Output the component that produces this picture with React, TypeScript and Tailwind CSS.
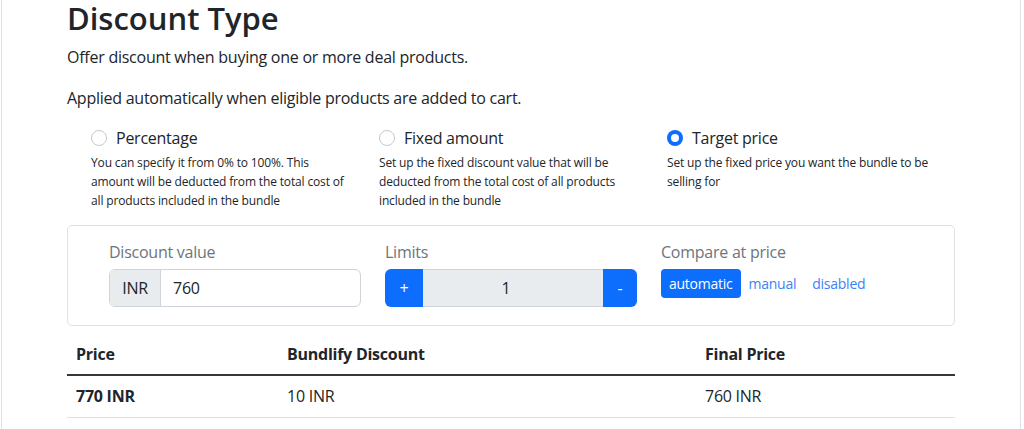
import React from "react";

const font = { fontFamily: '"Open Sans", "Noto Sans", sans-serif' };

function Radio({ checked }: { checked?: boolean }) {
  return checked ? (
    <span className="w-4 h-4 rounded-full bg-[#0d6efd] flex items-center justify-center shrink-0">
      <span className="w-2 h-2 rounded-full bg-white" />
    </span>
  ) : (
    <span className="w-4 h-4 rounded-full border border-[#c5c9cd] bg-white shrink-0" />
  );
}

const options = [
  {
    label: "Percentage",
    lines: [
      "You can specify it from 0% to 100%. This",
      "amount will be deducted from the total cost of",
      "all products included in the bundle",
    ],
  },
  {
    label: "Fixed amount",
    lines: [
      "Set up the fixed discount value that will be",
      "deducted from the total cost of all products",
      "included in the bundle",
    ],
  },
  {
    label: "Target price",
    checked: true,
    lines: ["Set up the fixed price you want the bundle to be", "selling for"],
  },
];

export default function App() {
  return (
    <div className="w-[1024px] h-[429px] overflow-hidden bg-white text-[#212529] tracking-[-0.25px]" style={font}>
      <div className="ml-[1px] w-[1020px] h-full border-x border-[#dee2e6] pl-[65px]">
        <div className="w-[888px]">
          <h2 className="text-[31px] font-semibold leading-[36px] mb-[9px] tracking-normal">Discount Type</h2>
          <p className="text-base leading-6 mb-[17px]">Offer discount when buying one or more deal products.</p>
          <p className="text-base leading-6 mb-4">Applied automatically when eligible products are added to cart.</p>

          <div className="pl-6 grid grid-cols-3 mt-[2px]">
            {options.map((o) => (
              <div key={o.label}>
                <div className="flex items-center gap-[9px] h-6">
                  <Radio checked={o.checked} />
                  <span className="text-base leading-6">{o.label}</span>
                </div>
                <div className="text-[12px] leading-[19px] mt-[3px] tracking-[-0.15px]">
                  {o.lines.map((l) => (
                    <div key={l}>{l}</div>
                  ))}
                </div>
              </div>
            ))}
          </div>

          <div className="mt-[15px] h-[101px] border border-[#dee2e6] rounded-[5px] pl-[41px] pt-[14px] grid grid-cols-[252px_252px_252px] gap-x-6">
            <div>
              <div className="text-base leading-6 text-[#6c757d] mb-[5px]">Discount value</div>
              <div className="flex h-[38px] border border-[#ced4da] rounded-[6px] overflow-hidden">
                <div className="w-[51px] bg-[#e9ecef] border-r border-[#ced4da] flex items-center justify-center text-base">INR</div>
                <div className="flex-1 flex items-center pl-3 text-base">760</div>
              </div>
            </div>
            <div>
              <div className="text-base leading-6 text-[#6c757d] mb-[5px]">Limits</div>
              <div className="flex h-[38px]">
                <div className="w-[38px] bg-[#0d6efd] text-white rounded-l-[6px] flex items-center justify-center text-base">+</div>
                <div className="flex-1 bg-[#e9ecef] border-y border-[#ced4da] flex items-center justify-center pr-[14px] text-base">1</div>
                <div className="w-[34px] bg-[#0d6efd] text-white rounded-r-[6px] flex items-center justify-center text-base">-</div>
              </div>
            </div>
            <div>
              <div className="text-base leading-6 text-[#6c757d] mb-[5px]">Compare at price</div>
              <div className="flex h-[29px] items-center text-[14px]">
                <div className="h-[29px] px-2 bg-[#0d6efd] text-white rounded-[4px] flex items-center">automatic</div>
                <div className="px-2 text-[#3b82f6]">manual</div>
                <div className="px-2 text-[#3b82f6]">disabled</div>
              </div>
            </div>
          </div>

          <div className="mt-2">
            <div className="grid grid-cols-[212px_418px_258px] border-b-2 border-[#33383c] font-bold text-base">
              <div className="px-[9px] pt-2 pb-2 leading-6">Price</div>
              <div className="px-2 pt-2 pb-2 leading-6">Bundlify Discount</div>
              <div className="px-2 pt-2 pb-2 leading-6">Final Price</div>
            </div>
            <div className="grid grid-cols-[212px_418px_258px] border-b border-[#dee2e6] text-base">
              <div className="px-[9px] pt-2 pb-[9px] leading-6 font-bold">770 INR</div>
              <div className="px-2 pt-2 pb-[9px] leading-6">10 INR</div>
              <div className="px-2 pt-2 pb-[9px] leading-6">760 INR</div>
            </div>
          </div>
        </div>
      </div>
    </div>
  );
}
